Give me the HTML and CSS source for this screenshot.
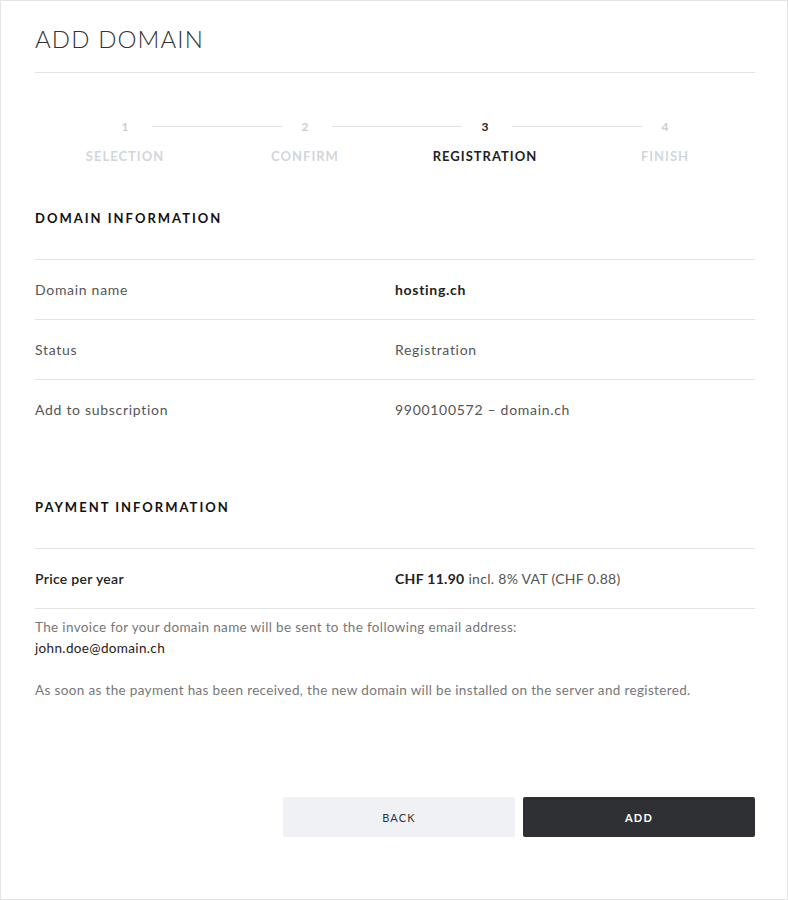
FILE: index.html
```html
<!DOCTYPE html>
<html lang="en">
<head>
    <meta charset="UTF-8">
    <meta name="viewport" content="width=device-width, initial-scale=1.0">
    <title>Add domain</title>
    <link rel="stylesheet" href="styles.css">
</head>
<body>
    <div class="pagina">
        <h1 class="titulo">ADD DOMAIN</h1>

        <div class="passos">
            <div class="numeros">
                <span class="num">1</span>
                <span class="linha"></span>
                <span class="num">2</span>
                <span class="linha"></span>
                <span class="num ativo">3</span>
                <span class="linha"></span>
                <span class="num">4</span>
            </div>
            <div class="rotulos">
                <span>SELECTION</span>
                <span>CONFIRM</span>
                <span class="ativo">REGISTRATION</span>
                <span>FINISH</span>
            </div>
        </div>

        <h2 class="secao">DOMAIN INFORMATION</h2>
        <div class="tabela">
            <div class="linha-info">
                <span class="chave">Domain name</span>
                <span class="valor forte">hosting.ch</span>
            </div>
            <div class="linha-info">
                <span class="chave">Status</span>
                <span class="valor">Registration</span>
            </div>
            <div class="linha-info sem-borda">
                <span class="chave">Add to subscription</span>
                <span class="valor">9900100572 – domain.ch</span>
            </div>
        </div>

        <h2 class="secao secao-pagamento">PAYMENT INFORMATION</h2>
        <div class="tabela">
            <div class="linha-info preco">
                <span class="chave forte">Price per year</span>
                <span class="valor"><b>CHF 11.90</b> incl. 8% VAT (CHF 0.88)</span>
            </div>
        </div>
        <p class="nota">The invoice for your domain name will be sent to the following email address:<br>
            <span class="email">john.doe@domain.ch</span></p>
        <p class="nota">As soon as the payment has been received, the new domain will be installed on the server and registered.</p>

        <div class="botoes">
            <button class="btn voltar">BACK</button>
            <button class="btn adicionar">ADD</button>
        </div>
    </div>
</body>
</html>
```
FILE: styles.css
```css
body {
    margin: 0;
    font-family: Lato, "Liberation Sans", sans-serif;
    color: #222;
}
.pagina {
    width: 788px;
    height: 900px;
    box-sizing: border-box;
    border: 1px solid #e4e4e4;
    padding: 0 32px 0 34px;
}
.titulo {
    margin: 0;
    padding: 26px 0 21px;
    font-size: 24px;
    font-weight: 300;
    letter-spacing: 1.1px;
    line-height: 24px;
    color: #333;
    border-bottom: 1px solid #e3e3e3;
}
.passos {
    padding-top: 44px;
}
.numeros {
    display: flex;
    align-items: center;
    padding: 0 63px;
    height: 18px;
}
.num {
    width: 54px;
    text-align: center;
    font-size: 12px;
    font-weight: 700;
    color: #c9ced4;
}
.linha {
    flex: 1;
    height: 1px;
    margin-right: -4px;
    background-color: #dfe3e8;
}
.rotulos {
    display: grid;
    grid-template-columns: repeat(4, 180px);
    margin-top: 13px;
}
.rotulos span {
    text-align: center;
    font-size: 13px;
    font-weight: 700;
    letter-spacing: 1px;
    color: #d2d6db;
}
.num.ativo,
.rotulos .ativo {
    color: #222;
}
.secao {
    margin: 46px 0 0;
    font-size: 13px;
    font-weight: 700;
    letter-spacing: 2px;
    line-height: 16px;
    color: #111;
}
.secao-pagamento {
    margin-top: 60px;
}
.tabela {
    margin-top: 33px;
    border-top: 1px solid #e3e3e3;
}
.linha-info {
    display: flex;
    height: 59px;
    align-items: center;
    border-bottom: 1px solid #e3e3e3;
    font-size: 14px;
    letter-spacing: 0.7px;
}
.linha-info.sem-borda {
    border-bottom: none;
}
.linha-info.preco {
    letter-spacing: 0.3px;
}
.chave {
    width: 360px;
    flex-shrink: 0;
    color: #555;
}
.valor {
    color: #555;
}
.forte,
.valor b {
    color: #222;
    font-weight: 700;
}
.chave.forte {
    font-weight: 600;
}
.nota {
    margin: 8px 0 0;
    font-size: 13.5px;
    line-height: 21px;
    color: #777;
    letter-spacing: 0.35px;
}
.nota + .nota {
    margin-top: 21px;
}
.email {
    color: #222;
}
.botoes {
    display: flex;
    justify-content: flex-end;
    gap: 8px;
    margin-top: 96px;
}
.btn {
    width: 232px;
    height: 40px;
    border: none;
    border-radius: 2px;
    font-family: Lato, "Liberation Sans", sans-serif;
    font-size: 11px;
    letter-spacing: 1.2px;
    cursor: pointer;
}
.voltar {
    background-color: #f0f1f5;
    color: #333;
}
.adicionar {
    background-color: #2f3033;
    color: #fff;
    font-weight: 700;
}
```
